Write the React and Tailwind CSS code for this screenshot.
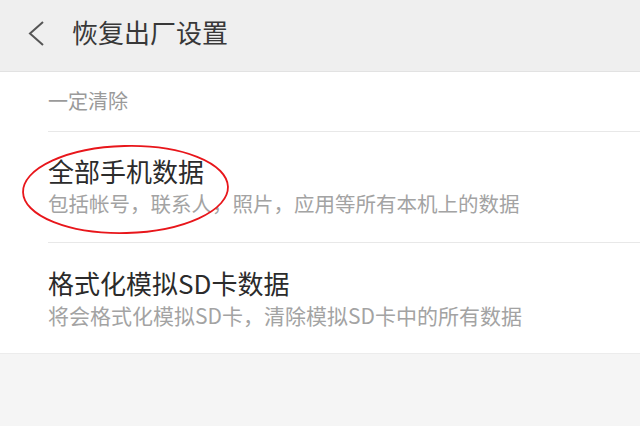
export default function App() {
  const font = { fontFamily: '"Noto Sans CJK SC", "Noto Sans", sans-serif' };
  return (
    <div className="relative w-[640px] h-[426px] bg-[#f5f5f5] overflow-hidden" style={font}>
      <div className="h-[72px] bg-[#efefef] border-b border-[#e2e2e2] flex items-center">
        <svg width="20" height="28" viewBox="0 0 20 28" className="ml-[26px] mt-[-5px]">
          <path d="M17 3 L4 14.5 L17 26" fill="none" stroke="#555" strokeWidth="2" />
        </svg>
        <div className="ml-[26px] mt-[-7px] text-[26px] leading-[32px] text-[#383838]">恢复出厂设置</div>
      </div>
      <div className="bg-white border-b border-[#ececec]">
        <div className="h-[60px] ml-[48px] border-b border-[#e8e8e8] flex items-center">
          <div className="text-[20px] leading-[28px] text-[#9a9a9a] mt-[-2px]">一定清除</div>
        </div>
        <div className="ml-[48px] h-[111px] border-b border-[#e8e8e8] flex flex-col justify-center">
          <div className="text-[26px] leading-[32px] text-[#2b2b2b] mt-[-3px]">全部手机数据</div>
          <div className="text-[20.5px] leading-[28px] text-[#a3a3a3] mt-[2px]">包括帐号，联系人，照片，应用等所有本机上的数据</div>
        </div>
        <div className="ml-[48px] h-[110px] flex flex-col justify-center">
          <div className="text-[26px] leading-[32px] text-[#2b2b2b] mt-[-1px]">格式化模拟SD卡数据</div>
          <div className="text-[21px] leading-[28px] text-[#a3a3a3] mt-[2px]">将会格式化模拟SD卡，清除模拟SD卡中的所有数据</div>
        </div>
      </div>
      <svg className="absolute left-0 top-0 pointer-events-none" width="640" height="426">
        <ellipse cx="125.5" cy="189.5" rx="102.5" ry="43.5" fill="none" stroke="#e8161b" strokeWidth="1.8" transform="rotate(-1.5 125.5 189.5)" />
      </svg>
    </div>
  );
}
